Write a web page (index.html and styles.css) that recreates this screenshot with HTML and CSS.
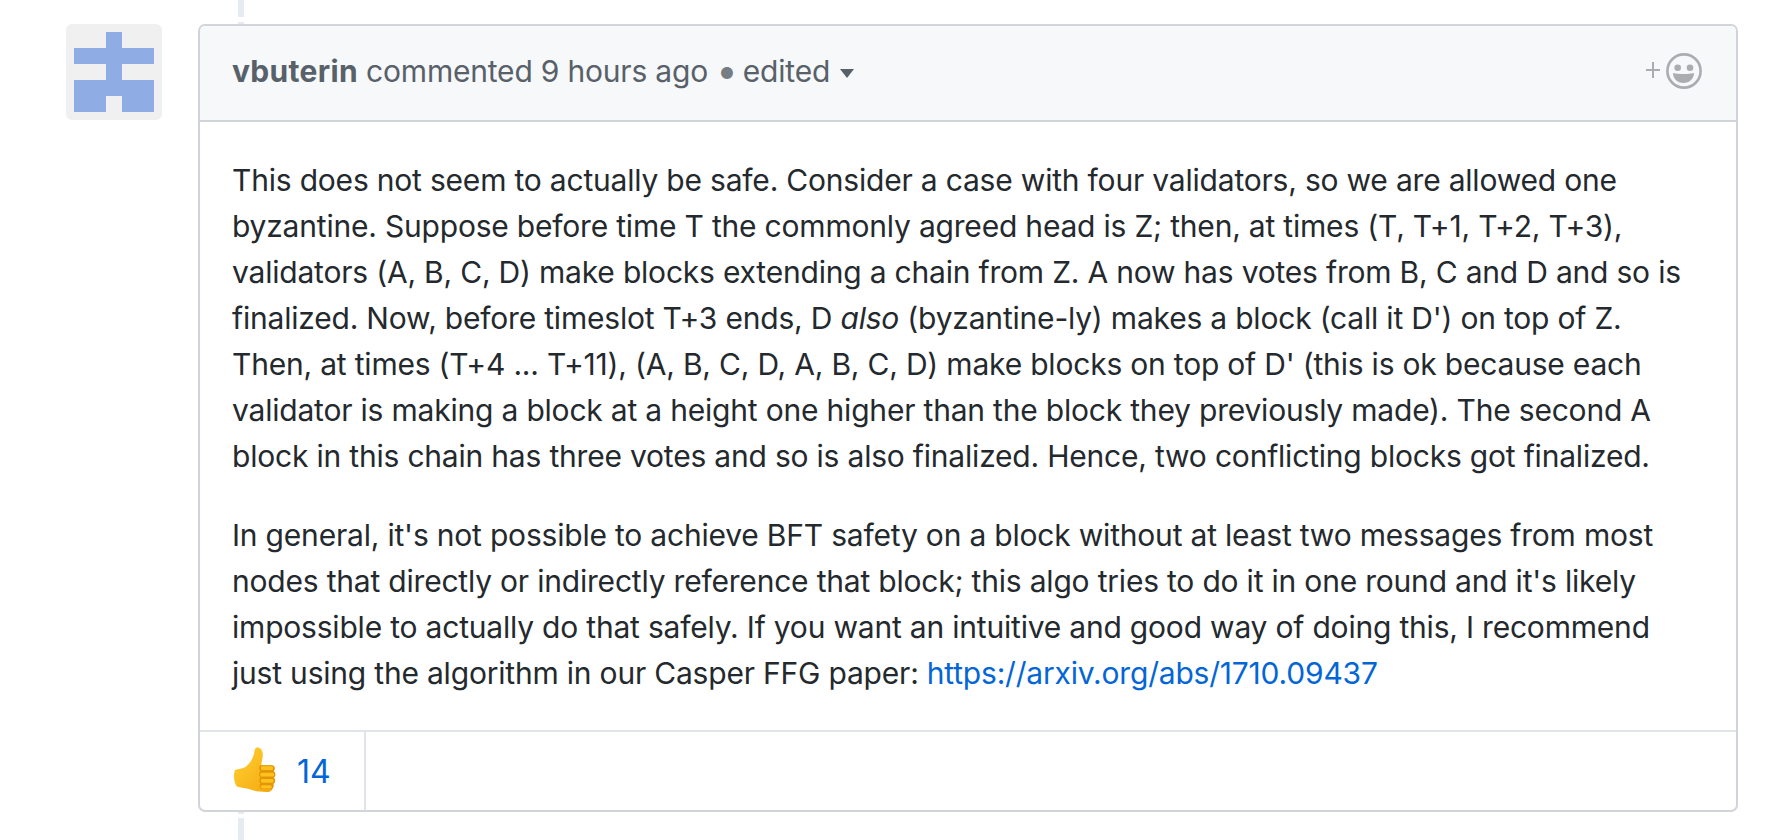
FILE: index.html
```html
<!DOCTYPE html>
<html lang="en">
<head>
<meta charset="utf-8">
<title>Comment</title>
<link rel="stylesheet" href="styles.css">
</head>
<body>
<div class="timeline">
  <div class="avatar">
    <svg class="identicon" viewBox="0 0 5 5" width="80" height="80" aria-hidden="true">
      <path d="M2 0h1v1h2v1H3v1h2v2H3V4H2v1H0V3h2V2H0V1h2z"/>
    </svg>
  </div>
  <article class="comment">
    <header class="comment-head">
      <h3 class="meta"><strong>vbuterin</strong> commented 9 hours ago <span class="dot">•</span> edited <span class="caret"></span></h3>
      <svg class="react" viewBox="0 0 56 36" width="56" height="36" aria-hidden="true">
        <path d="M6 9h2v7h6v2H8v7H6v-7H0v-2h6z"/>
        <circle cx="38" cy="18" r="16.600" fill="none" stroke="currentColor" stroke-width="2.600"/>
        <circle cx="31.700" cy="14.700" r="3.300"/>
        <circle cx="44" cy="14.700" r="3.300"/>
        <path d="M27 20c6 1.300 15 1.300 21 0 0 6-4.700 10-10.500 10S27 26 27 20z"/>
      </svg>
    </header>
    <div class="comment-body">
      <p>This does not seem to actually be safe. Consider a case with four validators, so we are allowed one byzantine. Suppose before time T the commonly agreed head is Z; then, at times (T, T+1, T+2, T+3), validators (A, B, C, D) make blocks extending a chain from Z. A now has votes from B, C and D and so is finalized. Now, before timeslot T+3 ends, D <em>also</em> (byzantine-ly) makes a block (call it D') on top of Z. Then, at times (T+4 ... T+11), (A, B, C, D, A, B, C, D) make blocks on top of D' (this is ok because each validator is making a block at a height one higher than the block they previously made). The second A block in this chain has three votes and so is also finalized. Hence, two conflicting blocks got finalized.</p>
      <p>In general, it's not possible to achieve BFT safety on a block without at least two messages from most nodes that directly or indirectly reference that block; this algo tries to do it in one round and it's likely impossible to actually do that safely. If you want an intuitive and good way of doing this, I recommend just using the algorithm in our Casper FFG paper: <a href="#">https://arxiv.org/abs/1710.09437</a></p>
    </div>
    <footer class="reactions">
      <div class="reaction">
        <svg class="thumb" viewBox="0 0 48 50" width="46" height="48" aria-hidden="true">
          <defs>
            <linearGradient id="thumb-fill" x1="0" y1="0" x2="1" y2="1">
              <stop offset="0" stop-color="#ffd233"/>
              <stop offset="1" stop-color="#f5a70f"/>
            </linearGradient>
          </defs>
          <path fill="url(#thumb-fill)" d="M3 25c4-1 8-1 11-3 4-3 8-9 9-14 .4-3 .6-6 3-6.500 3-.6 5.500 2 6 6 .5 4-1 8.500-1.500 12.500h9c3 0 4 2 4 4 0 9 0 15-1 20-1 3-3 4-7 4-7 0-12-1-17-3-4-1-8-1.500-13-2.500C2.500 40 1 31 3 25z"/>
          <path fill="#e2950a" d="M30 20h12c3 0 3.600 5 1.200 6.200 2.800 1 2.800 5.600.3 6.800 2.300 1 2.200 5.400-.5 6.400 1.300 1.800.3 5.600-2.500 5.600h-9c-3 0-3.500-4.300-1.500-5.800-2-1-2-5.400 0-6.400-2-1-2.500-5.700 0-6.700-2.300-1-2-6.100 0-6.100z"/>
          <path fill="#fcc21b" d="M31.500 21.200h10c2 0 2 3.800 0 3.800h-10c-2 0-2-3.800 0-3.800zm-.5 6.600h11.500c2 0 2 4 0 4H31c-2 0-2-4 0-4zm.5 6.700H42c2 0 2 3.800 0 3.800H31.500c-2 0-2-3.800 0-3.800zm0 6.500h8.500c2 0 2 3.300 0 3.300h-8.500c-2 0-2-3.300 0-3.300z"/>
        </svg>
        <span class="count">14</span>
      </div>
    </footer>
  </article>
</div>
</body>
</html>
```
FILE: styles.css
```css
* { box-sizing: border-box; }
html, body { margin: 0; padding: 0; }
body {
  width: 1772px;
  height: 840px;
  overflow: hidden;
  background: #fff;
  color: #24292e;
  font-family: Inter, Roboto, "Liberation Sans", sans-serif;
}
.timeline {
  position: relative;
  display: flex;
  align-items: flex-start;
  gap: 36px;
  padding: 24px 34px 0 66px;
}
.timeline::before {
  content: "";
  position: absolute;
  left: 238px;
  top: 0;
  width: 6px;
  height: 840px;
  background: linear-gradient(#e6ebf1 0 17px, #fff 17px 22px, #e6ebf1 22px 814px, #fff 814px 818px, #e6ebf1 818px);
}
.avatar {
  flex: none;
  width: 96px;
  height: 96px;
  padding: 8px;
  border-radius: 6px;
  background: #f0f0f0;
}
.identicon { display: block; fill: #90ace5; }
.comment {
  position: relative;
  flex: 1;
  height: 788px;
  display: flex;
  flex-direction: column;
  background: #fff;
  border: 2px solid #d1d5da;
  border-radius: 7px;
}
.comment-head {
  flex: none;
  height: 96px;
  display: flex;
  align-items: center;
  justify-content: space-between;
  padding: 0 34px 4px 32px;
  background: #f6f8fa;
  border-bottom: 2px solid #d1d5da;
  border-radius: 5px 5px 0 0;
}
.meta {
  margin: 0;
  font-size: 30px;
  font-weight: 400;
  letter-spacing: -0.200px;
  color: #586069;
}
.meta strong { font-weight: 700; letter-spacing: 0.300px; }
.dot { color: #767d85; font-size: 38px; letter-spacing: -3px; line-height: 0; vertical-align: -2px; }
.caret {
  display: inline-block;
  margin-left: 2px;
  vertical-align: 4px;
  border: 7.500px solid transparent;
  border-top: 9px solid #586069;
  border-bottom: 0;
}
.react { display: block; fill: currentColor; color: #a9adb2; }
.comment-body {
  flex: 1;
  padding: 35px 36px 0 32px;
  font-size: 30px;
  letter-spacing: -0.200px;
  line-height: 46px;
}
.comment-body p { margin: 0 0 33px; }
.comment-body a { color: #0366d6; text-decoration: none; }
.reactions {
  flex: none;
  height: 80px;
  display: flex;
  border-top: 2px solid #e1e4e8;
}
.reaction {
  display: flex;
  align-items: center;
  gap: 19px;
  padding: 0 32px;
  width: 166px;
  border-right: 2px solid #e1e4e8;
}
.thumb { display: block; margin-bottom: 3px; }
.count { font-size: 32px; color: #0366d6; }
```
